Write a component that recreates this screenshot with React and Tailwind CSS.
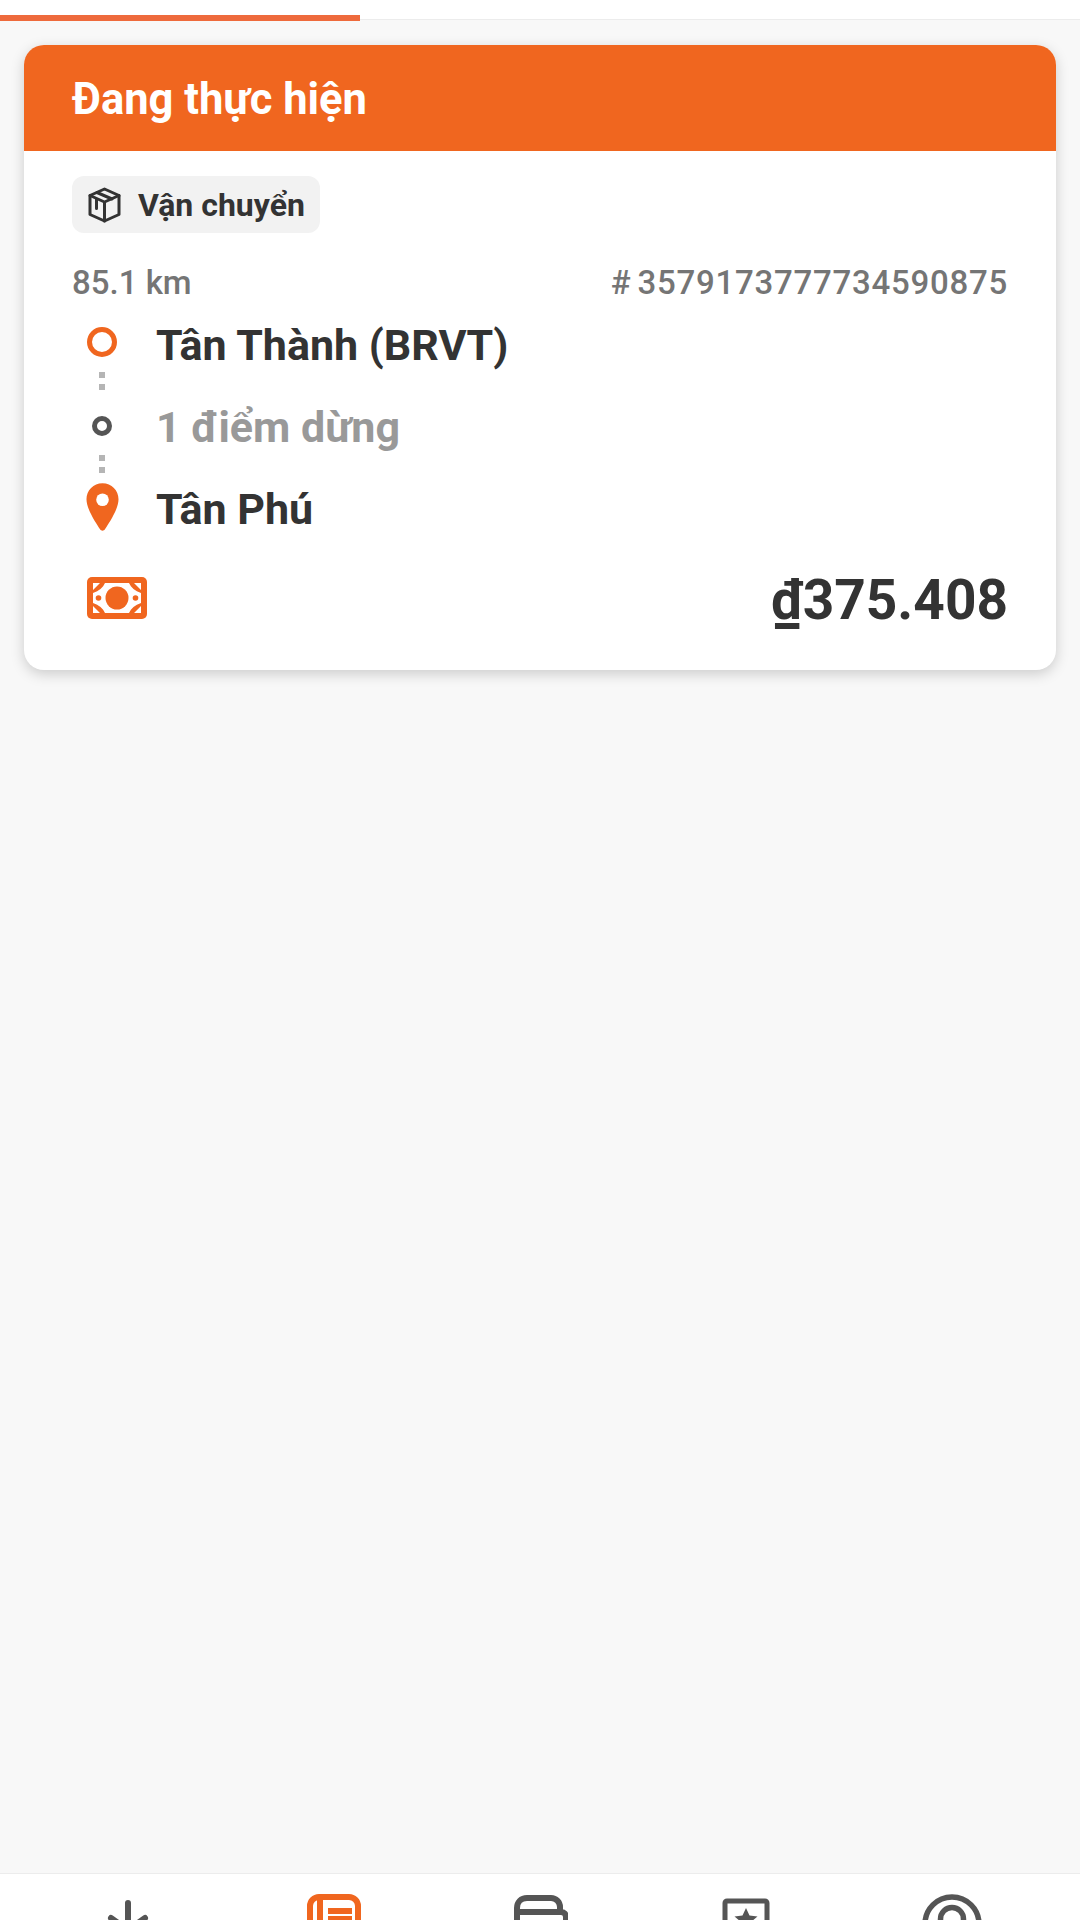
import React from 'react';

const BoxIcon = () => (
  <svg width="35" height="36" viewBox="0 0 35 36" fill="none" stroke="#333333" strokeWidth="3" strokeLinejoin="round" strokeLinecap="round">
    <path d="M17.5 2 32 8.500V27.500L17.500 34 3 27.500V8.500Z" />
    <path d="M3 8.500 17.500 15 32 8.500M17.500 15V34" />
    <path d="M10 5.500 25 12M9.500 12.500v9" />
  </svg>
);

const PinIcon = () => (
  <svg width="33" height="51" viewBox="0 0 34 50">
    <path d="M17 0C7.600 0 .5 7.300.5 16.500.5 27 11 42 14.500 47.500c1.200 2 3.800 2 5 0C23 42 33.500 27 33.500 16.500 33.500 7.300 26.400 0 17 0Z" fill="#f0661f" />
    <circle cx="17" cy="17" r="6.500" fill="#ffffff" />
  </svg>
);

const MoneyIcon = () => (
  <svg width="60" height="42" viewBox="0 0 60 42">
    <rect width="60" height="42" rx="5" fill="#f0661f" />
    <path d="M18 6h24c2 4.500 6 8 12 10v10c-6 2-10 5.500-12 10H18c-2-4.500-6-8-12-10V16c6-2 10-5.500 12-10Z" fill="#ffffff" />
    <circle cx="30" cy="21" r="11.500" fill="#f0661f" />
    <circle cx="11.500" cy="21" r="2.800" fill="#f0661f" />
    <circle cx="48.500" cy="21" r="2.800" fill="#f0661f" />
    <path d="M6 6h7l-7 7ZM54 6h-7l7 7ZM6 36h7l-7-7ZM54 36h-7l7-7Z" fill="#ffffff" />
  </svg>
);

const Dots = () => (
  <div className="flex flex-col items-center gap-[6px] py-[1px]">
    <span className="w-[6px] h-[6px] bg-[#b5b5b5]" />
    <span className="w-[6px] h-[6px] bg-[#b5b5b5]" />
  </div>
);

const NavItem = ({ children }) => (
  <div className="flex-1 flex justify-center pt-[20px]">{children}</div>
);

export default function App() {
  return (
    <div
      className="w-[1080px] h-[1920px] flex flex-col bg-[#f8f8f8] overflow-hidden"
      style={{ fontFamily: 'Roboto, sans-serif' }}
    >
      {/* Thanh tiến trình */}
      <div className="h-[20px] bg-white border-b border-[#ececec] pt-[15px] shrink-0">
        <div className="h-[6px] w-[360px] bg-[#ee6a3c]" />
      </div>

      <div className="flex-1 px-[24px] pt-[25px]">
        <div className="rounded-[20px] bg-white overflow-hidden shadow-[0_4px_14px_rgba(0,0,0,0.18)]">
          <div className="h-[106px] bg-[#f0661f] flex items-center px-[48px] pt-[3px]">
            <span className="text-[43.500px] font-bold text-white leading-none">Đang thực hiện</span>
          </div>

          <div className="px-[48px] pt-[25px] h-[519px]">
            <div className="inline-flex items-center gap-[16px] h-[57px] px-[15px] rounded-[12px] bg-[#f2f2f2] align-top">
              <BoxIcon />
              <span className="text-[32px] font-bold text-[#333333] leading-none">Vận chuyển</span>
            </div>

            <div className="flex justify-between items-center mt-[33px] text-[33px] font-medium text-[#757575] leading-none">
              <span>85.1 km</span>
              <span className="flex gap-[6px] tracking-[0.75px]"><span>#</span><span>3579173777734590875</span></span>
            </div>

            <div className="flex mt-[15px]">
              <div className="w-[60px] flex flex-col items-center shrink-0">
                <span className="mt-[13px] w-[30px] h-[30px] rounded-full border-[5px] border-[#f0661f]" />
                <div className="mt-[14px]"><Dots /></div>
                <span className="mt-[25px] w-[20px] h-[20px] rounded-full border-[5px] border-[#555555]" />
                <div className="mt-[18px]"><Dots /></div>
                <div className="mt-[8px]"><PinIcon /></div>
              </div>
              <div className="ml-[24px] flex flex-col gap-[20px] text-[43px] font-bold leading-[62px]">
                <span className="text-[#333333]">Tân Thành (BRVT)</span>
                <span className="text-[#999999]">1 điểm dừng</span>
                <span className="text-[#333333]">Tân Phú</span>
              </div>
            </div>

            <div className="flex justify-between items-center mt-[33px]">
              <div className="ml-[15px] -mt-[6px]"><MoneyIcon /></div>
              <span className="text-[55px] font-bold text-[#333333] leading-none">₫375.408</span>
            </div>
          </div>
        </div>
      </div>

      {/* Thanh điều hướng, bị cắt ở mép dưới */}
      <div className="h-[47px] shrink-0 bg-white border-t border-[#ececec] flex overflow-hidden px-[25px]">
        <NavItem>
          <svg width="60" height="60" viewBox="0 0 60 60" fill="none" stroke="#555555" strokeWidth="6" strokeLinecap="round">
            <path d="M30 9v30M13 24l17 12 17-12" />
          </svg>
        </NavItem>
        <NavItem>
          <svg width="54" height="60" viewBox="0 0 54 60" fill="none" stroke="#f0661f" strokeWidth="6">
            <rect x="3" y="3" width="48" height="54" rx="9" />
            <path d="M13 3v54M21 17h24M21 25h24" />
          </svg>
        </NavItem>
        <NavItem>
          <svg width="56" height="60" viewBox="0 0 56 60" fill="none" stroke="#555555" strokeWidth="6">
            <path d="M5 40V14c0-6 4-10 10-10h24c5 0 9 4 9 9v3M5 18h44c3 0 5 2 5 5v20" />
          </svg>
        </NavItem>
        <NavItem>
          <svg width="48" height="60" viewBox="0 0 48 60">
            <rect x="3" y="7" width="42" height="50" fill="none" stroke="#555555" strokeWidth="5" rx="2" />
            <path d="M24 14l3.500 7.500 8 1-6 5 2 8-7.500-4-7.500 4 2-8-6-5 8-1Z" fill="#555555" />
          </svg>
        </NavItem>
        <NavItem>
          <svg width="60" height="60" viewBox="0 0 60 60" fill="none" stroke="#555555" strokeWidth="5.500">
            <circle cx="30" cy="30" r="27" />
            <circle cx="30" cy="25" r="11.500" />
          </svg>
        </NavItem>
      </div>
    </div>
  );
}
